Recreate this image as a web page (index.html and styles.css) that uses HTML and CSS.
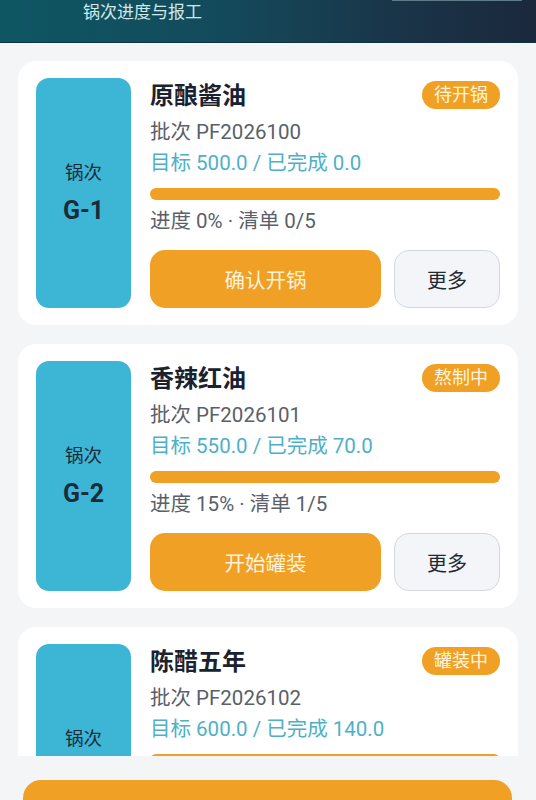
FILE: index.html
```html
<!DOCTYPE html>
<html lang="zh-CN">
<head>
<meta charset="utf-8">
<title>锅次进度与报工</title>
<link rel="stylesheet" href="styles.css">
</head>
<body>
<div class="app">
  <header class="topbar">
    <div class="subtitle">锅次进度与报工</div>
    <div class="topline"></div>
  </header>
  <main class="list">
    <section class="card">
      <div class="pot"><div class="pot-label">锅次</div><div class="pot-no">G-1</div></div>
      <div class="info">
        <div class="head"><div class="name">原酿酱油</div><span class="badge">待开锅</span></div>
        <div class="batch">批次 PF2026100</div>
        <div class="target">目标 500.0 / 已完成 0.0</div>
        <div class="bar"></div>
        <div class="progress">进度 0% · 清单 0/5</div>
        <div class="actions"><button class="btn-main">确认开锅</button><button class="btn-more">更多</button></div>
      </div>
    </section>
    <section class="card">
      <div class="pot"><div class="pot-label">锅次</div><div class="pot-no">G-2</div></div>
      <div class="info">
        <div class="head"><div class="name">香辣红油</div><span class="badge">熬制中</span></div>
        <div class="batch">批次 PF2026101</div>
        <div class="target">目标 550.0 / 已完成 70.0</div>
        <div class="bar"></div>
        <div class="progress">进度 15% · 清单 1/5</div>
        <div class="actions"><button class="btn-main">开始罐装</button><button class="btn-more">更多</button></div>
      </div>
    </section>
    <section class="card">
      <div class="pot"><div class="pot-label">锅次</div><div class="pot-no">G-3</div></div>
      <div class="info">
        <div class="head"><div class="name">陈醋五年</div><span class="badge">罐装中</span></div>
        <div class="batch">批次 PF2026102</div>
        <div class="target">目标 600.0 / 已完成 140.0</div>
        <div class="bar"></div>
        <div class="progress">进度 23% · 清单 2/5</div>
        <div class="actions"><button class="btn-main">完成罐装</button><button class="btn-more">更多</button></div>
      </div>
    </section>
  </main>
  <footer class="footer">
    <div class="btn-footer"></div>
  </footer>
</div>
</body>
</html>
```
FILE: styles.css
```css
* { box-sizing: border-box; }
html, body { margin: 0; padding: 0; }
body {
  background: #f3f5f7;
  font-family: Roboto, "Noto Sans CJK SC", sans-serif;
  width: 536px;
  height: 800px;
  overflow: hidden;
}
.app { display: flex; flex-direction: column; height: 800px; }
.topbar {
  position: relative;
  height: 43px;
  flex: none;
  background: linear-gradient(90deg, #0e5663 0%, #134b5c 40%, #1a3448 75%, #1b283c 100%);
  border-bottom: 1px solid #0d3440;
  padding: 0 0 0 83px;
}
.subtitle {
  font-size: 17px;
  line-height: 24px;
  color: #cfe9ec;
}
.topline {
  position: absolute;
  top: 0;
  left: 392px;
  width: 130px;
  height: 1px;
  background: #5f7b87;
}
.list {
  flex: none;
  height: 713px;
  overflow: hidden;
  padding: 18px 18px 0 18px;
  display: flex;
  flex-direction: column;
  gap: 19px;
}
.card {
  flex: none;
  background: #ffffff;
  border-radius: 18px;
  padding: 17px 18px;
  display: flex;
  gap: 19px;
  height: 264px;
}
.pot {
  flex: none;
  width: 95px;
  background: #3db6d5;
  border-radius: 13px;
  display: flex;
  flex-direction: column;
  align-items: center;
  justify-content: center;
  color: #1c2b3a;
}
.pot-label { font-size: 18.5px; line-height: 24px; }
.pot-no { font-size: 25px; line-height: 30px; font-weight: 700; margin-top: 11px; }
.info { flex: 1; display: flex; flex-direction: column; min-width: 0; }
.head {
  height: 34px;
  display: flex;
  align-items: center;
  justify-content: space-between;
}
.name { font-size: 24px; font-weight: 700; color: #1a2230; line-height: 30px; margin-top: 2px; }
.badge {
  height: 28px;
  line-height: 28px;
  padding: 0 12px;
  border-radius: 14px;
  background: #f0a024;
  color: #fff4de;
  font-size: 18px;
}
.batch { margin-top: 6px; font-size: 20.5px; line-height: 28px; color: #59606a; }
.target { margin-top: 3px; font-size: 20.5px; line-height: 28px; color: #4eb0c7; }
.bar { margin-top: 11px; height: 12px; border-radius: 6px; background: #f0a024; }
.progress { margin-top: 7px; font-size: 20.5px; line-height: 28px; color: #59606a; }
.actions { margin-top: 15px; display: flex; gap: 13px; height: 58px; }
button { font-family: inherit; cursor: pointer; }
.btn-main {
  flex: none;
  width: 231px;
  border: none;
  border-radius: 15px;
  background: #f0a024;
  color: #fff2da;
  font-size: 20.5px;
}
.btn-more {
  flex: 1;
  border: 1.5px solid #d3d8de;
  border-radius: 15px;
  background: #f3f5f8;
  color: #222831;
  font-size: 20px;
}
.footer {
  flex: 1;
  padding: 24px 24px 0 23px;
}
.btn-footer {
  width: 100%;
  height: 60px;
  border-radius: 18px;
  background: #f0a024;
}
```
